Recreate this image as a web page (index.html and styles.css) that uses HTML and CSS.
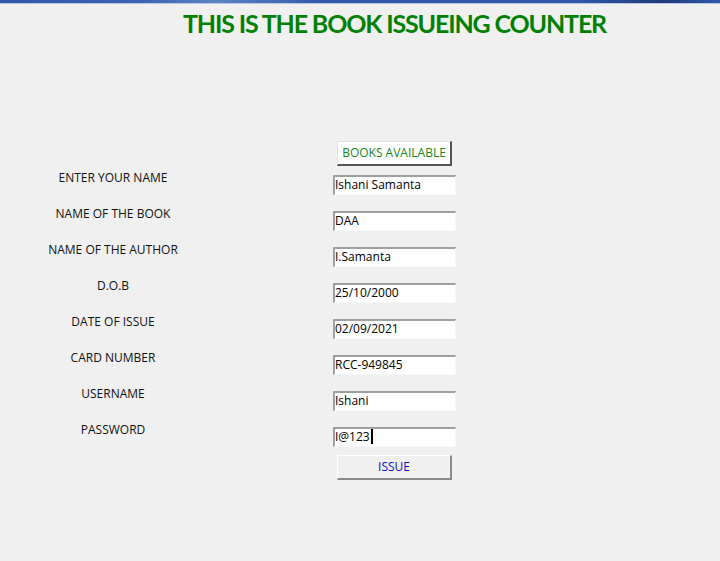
FILE: index.html
```html
<!DOCTYPE html>
<html>
<head>
<meta charset="utf-8">
<link rel="stylesheet" href="styles.css">
</head>
<body>
<div class="topbar"></div>
<h1 class="title">THIS IS THE BOOK ISSUEING COUNTER</h1>
<div class="form">
  <div class="btn-row"><button class="btn btn-books">BOOKS AVAILABLE</button></div>
  <div class="row"><div class="label">ENTER YOUR NAME</div><div class="field">Ishani Samanta</div></div>
  <div class="row"><div class="label">NAME OF THE BOOK</div><div class="field">DAA</div></div>
  <div class="row"><div class="label">NAME OF THE AUTHOR</div><div class="field">I.Samanta</div></div>
  <div class="row"><div class="label">D.O.B</div><div class="field">25/10/2000</div></div>
  <div class="row"><div class="label">DATE OF ISSUE</div><div class="field">02/09/2021</div></div>
  <div class="row"><div class="label">CARD NUMBER</div><div class="field">RCC-949845</div></div>
  <div class="row"><div class="label">USERNAME</div><div class="field">Ishani</div></div>
  <div class="row"><div class="label">PASSWORD</div><div class="field">I@123<span class="caret"></span></div></div>
  <div class="btn-row issue-row"><button class="btn btn-issue">ISSUE</button></div>
</div>
</body>
</html>
```
FILE: styles.css
```css
html, body {
  margin: 0;
  padding: 0;
  background: #f0f0f0;
  width: 720px;
  height: 561px;
  overflow: hidden;
  font-family: "Open Sans", "Noto Sans", sans-serif;
}
.topbar {
  height: 3px;
  background: linear-gradient(to right, #2d5aa8 0%, #3a66b0 20%, #5a86c0 30%, #2d5aa8 45%, #2d5aa8 80%, #1e3c78 92%, #2d5aa8 100%);
  border-bottom: 1px solid #b9c8e0;
}
.title {
  margin: 0;
  padding: 4px 0 0 183px;
  font-family: Lato, "Open Sans", sans-serif;
  font-weight: 700;
  font-size: 25px;
  line-height: 30px;
  color: #008000;
  letter-spacing: -1.15px;
}
.form {
  padding-top: 103px;
}
.btn-row {
  display: flex;
  padding-left: 337px;
}
.btn {
  width: 115px;
  height: 25px;
  padding: 0;
  font-family: "Open Sans", sans-serif;
  font-size: 12px;
  line-height: 16px;
  box-sizing: border-box;
  cursor: default;
}
.btn-books {
  background: #ffffff;
  color: #1a861a;
  border-top: 1px solid #e3e3e3;
  border-left: 1px solid #e3e3e3;
  border-right: 2px solid #555555;
  border-bottom: 2px solid #555555;
}
.row {
  display: flex;
  height: 36px;
}
.btn-row + .row {
  margin-top: 3px;
}
.label {
  width: 226px;
  padding-top: 1px;
  text-align: center;
  font-size: 12px;
  line-height: 16px;
  color: #111111;
}
.field {
  margin-top: 6px;
  margin-left: 107px;
  width: 123px;
  height: 20px;
  box-sizing: border-box;
  background: #ffffff;
  border-top: 2px solid #a0a0a0;
  border-left: 2px solid #a0a0a0;
  border-right: 1px solid #f8f8f8;
  border-bottom: 1px solid #f8f8f8;
  font-size: 12px;
  line-height: 15px;
  color: #000;
  white-space: nowrap;
  display: flex;
  align-items: flex-start;
}
.caret {
  display: inline-block;
  width: 2px;
  height: 15px;
  background: #000;
  margin-left: 1px;
}
.issue-row {
  margin-top: -2px;
}
.btn-issue {
  background: #f0f0f0;
  color: #1010c8;
  border-top: 1px solid #ffffff;
  border-left: 1px solid #ffffff;
  border-right: 2px solid #8a8a8a;
  border-bottom: 2px solid #8a8a8a;
}
```
